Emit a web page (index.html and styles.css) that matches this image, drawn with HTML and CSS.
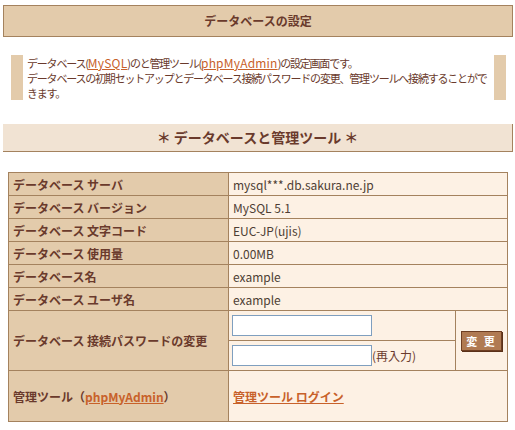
FILE: index.html
```html
<!DOCTYPE html>
<html lang="ja">
<head>
<meta charset="utf-8">
<title>データベースの設定</title>
<link rel="stylesheet" href="styles.css">
</head>
<body>
<div class="page">
  <div class="title">データベースの設定</div>
  <div class="notice">
    <p>データベース(<a href="#">MySQL</a>)のと管理ツール(<a href="#">phpMyAdmin</a>)の設定画面です。<br>データベースの初期セットアップとデータベース接続パスワードの変更、管理ツールへ接続することができます。</p>
  </div>
  <div class="heading">＊ データベースと管理ツール ＊</div>
  <table class="info">
    <tr><th>データベース サーバ</th><td colspan="2">mysql***.db.sakura.ne.jp</td></tr>
    <tr><th>データベース バージョン</th><td colspan="2">MySQL 5.1</td></tr>
    <tr><th>データベース 文字コード</th><td colspan="2">EUC-JP(ujis)</td></tr>
    <tr><th>データベース 使用量</th><td colspan="2">0.00MB</td></tr>
    <tr><th>データベース名</th><td colspan="2">example</td></tr>
    <tr><th>データベース ユーザ名</th><td colspan="2">example</td></tr>
    <tr class="pw">
      <th rowspan="2">データベース 接続パスワードの変更</th>
      <td class="inp"><input type="password" class="field"></td>
      <td rowspan="2" class="btncell"><button class="btn">変 更</button></td>
    </tr>
    <tr class="pw">
      <td class="inp"><input type="password" class="field"><span class="re">(再入力)</span></td>
    </tr>
    <tr class="tool">
      <th>管理ツール（<a href="#" class="pma">phpMyAdmin</a>）</th>
      <td colspan="2"><a href="#" class="login">管理ツール ログイン</a></td>
    </tr>
  </table>
</div>
</body>
</html>
```

FILE: styles.css
```css
html, body {
  margin: 0;
  padding: 0;
  background: #ffffff;
}
body {
  font-family: "Noto Sans CJK JP", "DejaVu Sans", sans-serif;
  font-size: 12px;
  color: #6a3a2c;
}
.page {
  width: 510px;
  margin: 5px 0 0 3px;
}
.title {
  height: 30px;
  line-height: 30px;
  background: #e3cbab;
  border: 1px solid #a4825e;
  text-align: center;
  font-weight: bold;
  font-size: 12px;
}
.notice {
  margin: 18px 7px 0 8px;
  height: 45px;
  border-left: 12px solid #e3cbab;
  border-right: 12px solid #e3cbab;
  padding: 0 4px 0 4px;
}
.notice p {
  margin: 0;
  font-size: 11px;
  line-height: 15px;
  letter-spacing: -1.2px;
}
.notice a {
  letter-spacing: 0.2px;
  font-size: 12px;
}
a {
  color: #c8612a;
}
.heading {
  margin-top: 24px;
  height: 27px;
  line-height: 27px;
  background: #f1e3d3;
  border-right: 1px solid #a4825e;
  border-bottom: 1px solid #a4825e;
  text-align: center;
  font-weight: bold;
  font-size: 14px;
}
.info {
  margin: 20px 0 0 5px;
  width: 500px;
  border-collapse: collapse;
  border: 1px solid #a4825e;
}
.info th, .info td {
  border: 1px solid #a4825e;
  height: 22px;
  padding: 0 0 0 4px;
  text-align: left;
  vertical-align: middle;
}
.info th {
  width: 215px;
  background: #e3cbab;
  font-weight: bold;
  color: #6a3a2c;
}
.info td {
  background: #fdf1e4;
  color: #4e3e34;
}
.pw .inp {
  height: 29px;
  padding: 0 0 0 3px;
}
.field {
  width: 138px;
  height: 19px;
  border: 1px solid #7f9fbf;
  padding: 0;
  margin: 0;
  vertical-align: middle;
  background: #ffffff;
}
.re {
  color: #6a3a2c;
  vertical-align: middle;
}
.btncell {
  width: 51px;
  text-align: center !important;
  padding: 0 !important;
}
.btn {
  width: 41px;
  height: 20px;
  padding: 0;
  background: #b07a52;
  color: #ffffff;
  font-family: inherit;
  font-size: 11px;
  font-weight: bold;
  letter-spacing: 2px;
  border: 1px solid #6e3e22;
  box-shadow: 1px 1px 0 #5a3018;
  cursor: pointer;
}
.tool th, .tool td {
  height: 50px;
}
.pma, .login {
  font-weight: bold;
  color: #c8612a;
}
```
